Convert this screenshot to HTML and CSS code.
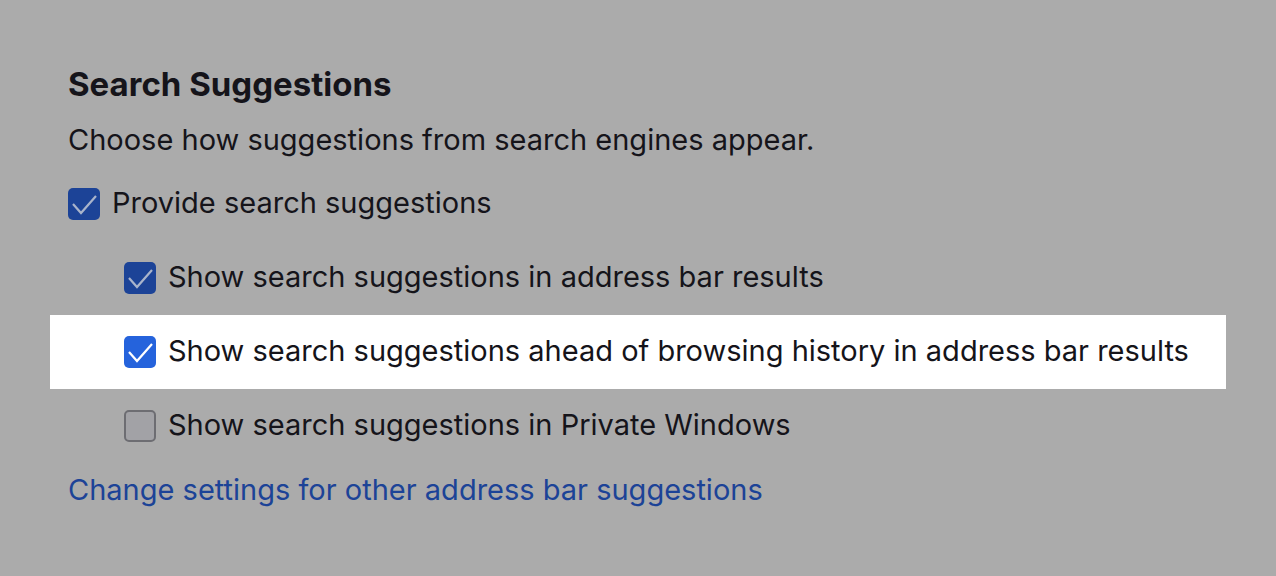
FILE: index.html
```html
<!DOCTYPE html>
<html lang="en">
<head>
  <meta charset="UTF-8" />
  <title>Search Suggestions</title>
  <link rel="stylesheet" href="styles.css">
</head>
<body>

<div class="section">
  <h1 class="title">Search Suggestions</h1>
  <p class="desc">Choose how suggestions from search engines appear.</p>

  <div class="row dim">
    <span class="box checked"><svg viewBox="0 0 32 32"><path d="M5 16 L13 25 L28 8" /></svg></span>
    <span>Provide search suggestions</span>
  </div>

  <div class="row dim nested">
    <span class="box checked"><svg viewBox="0 0 32 32"><path d="M5 16 L13 25 L28 8" /></svg></span>
    <span>Show search suggestions in address bar results</span>
  </div>

  <div class="row spot nested">
    <span class="box checked"><svg viewBox="0 0 32 32"><path d="M5 16 L13 25 L28 8" /></svg></span>
    <span>Show search suggestions ahead of browsing history in address bar results</span>
  </div>

  <div class="row dim nested">
    <span class="box"></span>
    <span>Show search suggestions in Private Windows</span>
  </div>

  <a class="link" href="#">Change settings for other address bar suggestions</a>
</div>

</body>
</html>
```

FILE: styles.css
```css
body {
  margin: 0;
  background: #ababab;
  font-family: Inter, 'Noto Sans', sans-serif;
  color: #15141a;
  width: 1276px;
  height: 576px;
  overflow: hidden;
}

.section {
  padding: 62px 0 0 50px;
  width: 1176px;
}

.title {
  font-size: 33px;
  font-weight: 700;
  margin: 0 0 0 18px;
  line-height: 44px;
}

.desc {
  font-size: 29px;
  margin: 14px 0 0 18px;
  line-height: 40px;
}

.row {
  display: flex;
  align-items: center;
  gap: 12px;
  height: 74px;
  padding-left: 18px;
  font-size: 29px;
  line-height: 34px;
}

.row span:last-child {
  margin-top: -2px;
}

.row.nested {
  padding-left: 74px;
}

.row:first-of-type {
  margin-top: 7px;
}

.spot {
  background: #ffffff;
}

.box {
  width: 32px;
  height: 32px;
  box-sizing: border-box;
  border-radius: 5px;
  border: 2px solid #6d6d72;
  background: #a2a2a6;
  flex-shrink: 0;
  display: flex;
}

.box svg {
  width: 32px;
  height: 32px;
  margin: -2px;
}

.box path {
  fill: none;
  stroke: #a9b4cb;
  stroke-width: 2.2;
}

.box.checked {
  border: none;
  background: #1c4397;
}

.box.checked svg {
  margin: 0;
}

.spot .box.checked {
  background: #2563dc;
}

.spot .box path {
  stroke: #ffffff;
}

.link {
  display: block;
  margin: 7px 0 0 18px;
  font-size: 29px;
  line-height: 40px;
  color: #1c4397;
  text-decoration: none;
}
```
